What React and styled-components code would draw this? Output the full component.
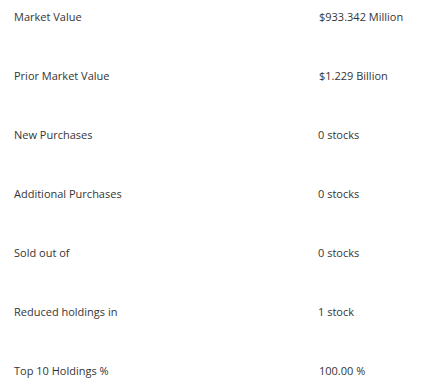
import React from "react";
import styled, { createGlobalStyle } from "styled-components";

const Global = createGlobalStyle`
  html, body { margin: 0; padding: 0; background: #ffffff; }
  body { font-family: "Open Sans", "Liberation Sans", sans-serif; }
`;

const Table = styled.div`
  display: flex;
  flex-direction: column;
  width: 435px;
  height: 389px;
  overflow: hidden;
`;

const Row = styled.div`
  display: grid;
  grid-template-columns: 304px 1fr;
  flex: 0 0 59px;
  box-sizing: border-box;
  padding: 9px 0 0 14px;
  align-items: start;
`;

const Label = styled.span`
  font-size: 11px;
  line-height: 15px;
  color: #353535;
`;

const Value = styled.span`
  font-size: 11px;
  line-height: 15px;
  color: #353535;
  padding-left: ${(p) => p.$shift || 0}px;
`;

const rows = [
  ["Market Value", "$933.342 Million", 1],
  ["Prior Market Value", "$1.229 Billion", 1],
  ["New Purchases", "0 stocks", 0],
  ["Additional Purchases", "0 stocks", 0],
  ["Sold out of", "0 stocks", 0],
  ["Reduced holdings in", "1 stock", 0],
  ["Top 10 Holdings %", "100.00 %", 1],
];

export default function App() {
  return (
    <>
      <Global />
      <Table>
        {rows.map(([l, v, s]) => (
          <Row key={l}>
            <Label>{l}</Label>
            <Value $shift={s}>{v}</Value>
          </Row>
        ))}
      </Table>
    </>
  );
}
